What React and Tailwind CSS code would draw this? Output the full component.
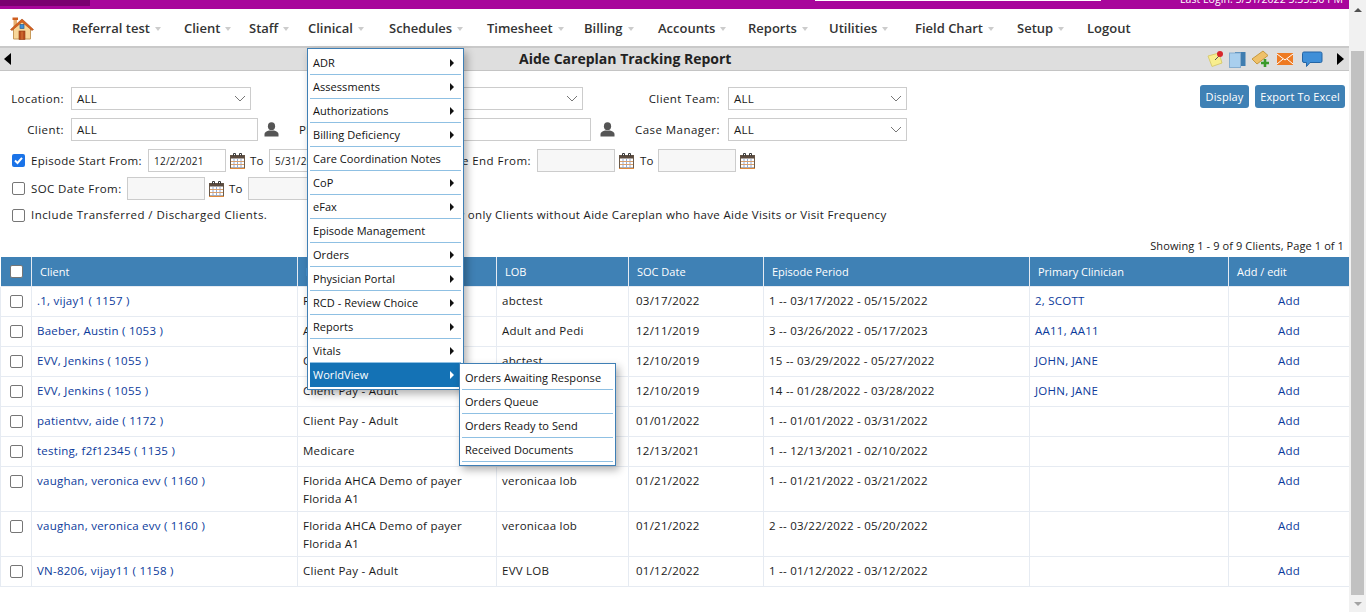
import React from 'react';

const navItems = [
    ['Referral test', true, 'w-[112px]'],
    ['Client', true, 'w-[65px]'],
    ['Staff', true, 'w-[59px]'],
    ['Clinical', true, 'w-[81px]'],
    ['Schedules', true, 'w-[98px]'],
    ['Timesheet', true, 'w-[97px]'],
    ['Billing', true, 'w-[74px]'],
    ['Accounts', true, 'w-[90px]'],
    ['Reports', true, 'w-[81px]'],
    ['Utilities', true, 'w-[86px]'],
    ['Field Chart', true, 'w-[102px]'],
    ['Setup', true, 'w-[70px]'],
    ['Logout', false, 'w-[60px]'],
];

const clinicalMenu = [
    ['ADR', true],
    ['Assessments', true],
    ['Authorizations', true],
    ['Billing Deficiency', true],
    ['Care Coordination Notes', false],
    ['CoP', true],
    ['eFax', true],
    ['Episode Management', false],
    ['Orders', true],
    ['Physician Portal', true],
    ['RCD - Review Choice', true],
    ['Reports', true],
    ['Vitals', true],
];

const subMenu = ['Orders Awaiting Response', 'Orders Queue', 'Orders Ready to Send', 'Received Documents'];

const rows = [
    { client: '.1, vijay1 ( 1157 )', payer: 'Private Pay', lob: 'abctest', soc: '03/17/2022', episode: '1 -- 03/17/2022 - 05/15/2022', clinician: '2, SCOTT' },
    { client: 'Baeber, Austin ( 1053 )', payer: 'Adult and Pedi', lob: 'Adult and Pedi', soc: '12/11/2019', episode: '3 -- 03/26/2022 - 05/17/2023', clinician: 'AA11, AA11' },
    { client: 'EVV, Jenkins ( 1055 )', payer: 'Client Pay - Adult', lob: 'abctest', soc: '12/10/2019', episode: '15 -- 03/29/2022 - 05/27/2022', clinician: 'JOHN, JANE' },
    { client: 'EVV, Jenkins ( 1055 )', payer: 'Client Pay - Adult', lob: 'abctest', soc: '12/10/2019', episode: '14 -- 01/28/2022 - 03/28/2022', clinician: 'JOHN, JANE' },
    { client: 'patientvv, aide ( 1172 )', payer: 'Client Pay - Adult', lob: '', soc: '01/01/2022', episode: '1 -- 01/01/2022 - 03/31/2022', clinician: '' },
    { client: 'testing, f2f12345 ( 1135 )', payer: 'Medicare', lob: '', soc: '12/13/2021', episode: '1 -- 12/13/2021 - 02/10/2022', clinician: '' },
    { client: 'vaughan, veronica evv ( 1160 )', payer: 'Florida AHCA Demo of payer Florida A1', lob: 'veronicaa lob', soc: '01/21/2022', episode: '1 -- 01/21/2022 - 03/21/2022', clinician: '', tall: true },
    { client: 'vaughan, veronica evv ( 1160 )', payer: 'Florida AHCA Demo of payer Florida A1', lob: 'veronicaa lob', soc: '01/21/2022', episode: '2 -- 03/22/2022 - 05/20/2022', clinician: '', tall: true },
    { client: 'VN-8206, vijay11 ( 1158 )', payer: 'Client Pay - Adult', lob: 'EVV LOB', soc: '01/12/2022', episode: '1 -- 01/12/2022 - 03/12/2022', clinician: '' },
];

const Calendar = () => (
    <svg width="17" height="17" viewBox="0 0 17 17" className="block shrink-0">
        <rect x="1.5" y="3.5" width="14" height="12.500" fill="#fff" stroke="#6b5a4a" />
        <rect x="1.500" y="3.500" width="14" height="3" fill="#5a4a3e" />
        <path d="M4.500 4V1.500h2V4M10.500 4V1.500h2V4" fill="none" stroke="#3a3a3a" />
        <path d="M5 7v9M8.500 7v9M12 7v9" stroke="#8fa9d6" />
        <path d="M2 9.500h13M2 12.500h13" stroke="#d8a06e" />
        <path d="M1 16.500h15" stroke="#e08a3c" />
    </svg>
);

const Person = () => (
    <svg width="15" height="15" viewBox="0 0 15 15" className="block shrink-0">
        <ellipse cx="7.500" cy="4.200" rx="3.600" ry="3.900" fill="#555" />
        <path d="M0.500 14.500v-2.500c0-2 2.500-3 4.500-3.600h5c2 .6 4.500 1.600 4.500 3.600v2.500z" fill="#555" />
    </svg>
);

const House = () => (
    <svg width="24" height="23" viewBox="0 0 24 23" className="block">
        <rect x="3.500" y="2" width="3.500" height="8" fill="#e8b070" />
        <rect x="2.500" y="0.500" width="5.500" height="2.500" fill="#cf5f20" />
        <path d="M3.500 11 12 3l8.500 8v11h-17z" fill="#f8d79a" stroke="#c79a5a" />
        <path d="M0.500 12.500 12 2l11.500 10.500-1.500 1L12 5 2 13.500z" fill="#d9641f" stroke="#a8481a" strokeWidth="0.600" />
        <rect x="9" y="14" width="6" height="8.500" fill="#b84f1e" stroke="#8f3d16" strokeWidth="0.600" />
        <path d="M12 14.500v8" stroke="#d97a3a" />
        <rect x="10" y="7.500" width="4" height="4" fill="#3f8fd8" stroke="#2b5f8f" strokeWidth="0.700" />
    </svg>
);

const Caret = ({ color = '#111' }) => (
    <span className="w-0 h-0 border-y-[4px] border-y-transparent border-l-[4px]" style={{ borderLeftColor: color }} />
);

const Field = ({ className, value = '', disabled }) => (
    <div className={`h-[23px] border border-[#ccc] px-[5px] flex items-center ${disabled ? 'bg-[#f7f7f7]' : 'bg-white'} ${className}`}>
        {value}
    </div>
);

const Select = ({ className, value = 'ALL' }) => (
    <div className={`h-[23px] border border-[#ccc] bg-white pl-[5px] pr-[4px] flex items-center justify-between ${className}`}>
        <span>{value}</span>
        <svg width="12" height="7" viewBox="0 0 12 7"><path d="M1 1l5 5 5-5" fill="none" stroke="#777" /></svg>
    </div>
);

const Check = ({ checked }) => (
    checked ? (
        <span className="w-[13px] h-[13px] rounded-[2px] bg-[#1a73e8] flex items-center justify-center shrink-0">
            <svg width="11" height="11" viewBox="0 0 11 11"><path d="M2 5.500 4.500 8 9 2.800" fill="none" stroke="#fff" strokeWidth="2" /></svg>
        </span>
    ) : (
        <span className="block w-[13px] h-[13px] rounded-[2px] border border-[#767676] bg-white shrink-0" />
    )
);

const Button = ({ children, className }) => (
    <div className={`h-[23px] self-start -mt-[2px] rounded-[3px] bg-[#3f81b5] text-white text-[11px] tracking-[0.1px] flex items-center justify-center ${className}`}>
        {children}
    </div>
);

const Th = ({ className, children }) => (
    <div className={`border-r border-[#e6ebf2] flex items-center px-2 ${className}`}>{children}</div>
);

const cols = {
    check: 'w-[31px]',
    client: 'w-[266px]',
    payer: 'w-[199px]',
    lob: 'w-[132px]',
    soc: 'w-[135px]',
    episode: 'w-[266px]',
    clinician: 'w-[199px]',
    add: 'w-[120px]',
};

const Row = ({ row }) => (
    <div className={`flex border-b border-[#e6ebf2] border-l ${row.tall ? 'h-[45px]' : 'h-[30px]'}`}>
        <div className={`${cols.check} shrink-0 border-r border-[#e6ebf2] flex justify-center pt-[8px] pl-[1px]`}><Check /></div>
        <div className={`${cols.client} shrink-0 border-r border-[#e6ebf2] pl-[5px] pt-[5px] text-[#0b3a9b]`}>{row.client}</div>
        <div className={`${cols.payer} shrink-0 border-r border-[#e6ebf2] pl-[5px] pr-[20px] pt-[5px] leading-[18px]`}>{row.payer}</div>
        <div className={`${cols.lob} shrink-0 border-r border-[#e6ebf2] pl-[5px] pt-[5px]`}>{row.lob}</div>
        <div className={`${cols.soc} shrink-0 border-r border-[#e6ebf2] pl-[7px] pt-[5px]`}>{row.soc}</div>
        <div className={`${cols.episode} shrink-0 border-r border-[#e6ebf2] pl-[5px] pt-[5px]`}>{row.episode}</div>
        <div className={`${cols.clinician} shrink-0 border-r border-[#e6ebf2] pl-[5px] pt-[5px] text-[#0b3a9b]`}>{row.clinician}</div>
        <div className={`${cols.add} shrink-0 pt-[5px] text-center text-[#0b3a9b]`}>Add</div>
    </div>
);

const MenuItem = ({ label, arrow, active }) => (
    <div className={`h-[24px] flex items-center justify-between pl-[3px] pr-[7px] ${active ? 'bg-[#1472b5] text-white' : 'border-b border-[#8fc0e3]'}`}>
        <span>{label}</span>
        {arrow && <Caret color={active ? '#fff' : '#111'} />}
    </div>
);

export default function App() {
    return (
        <div className="relative h-[612px] w-[1366px] overflow-hidden bg-white text-[11.5px] leading-[18px] tracking-[0.25px] text-[#1a1a1a] font-['Open_Sans',sans-serif]">
            <div className="flex h-[612px]">
                <div className="w-[1349px] shrink-0">
                    {/* top strip */}
                    <div className="relative h-[9px] bg-[#a8069b] overflow-hidden">
                        <div className="absolute left-0 top-0 h-[6px] w-[90px] bg-[#7a0070]" />
                        <div className="absolute left-[815px] top-0 h-[1px] w-[286px] bg-white" />
                        <div className="absolute right-[6px] top-[-10px] text-[10.5px] tracking-[0.05px] text-white whitespace-nowrap">Last Login: 5/31/2022 3:35:36 PM</div>
                    </div>

                    {/* main nav */}
                    <div className="h-[39px] border-b-2 border-[#c9c9c9] flex items-center pl-[10px] text-[13px] tracking-normal text-[#333] font-semibold">
                        <div className="w-[62px] pt-[1px]"><House /></div>
                        {navItems.map(([label, caret, w]) => (
                            <div key={label} className={`${w} shrink-0 flex items-center gap-[5px] whitespace-nowrap`}>
                                <span>{label}</span>
                                {caret && <span className="w-0 h-0 border-x-[3px] border-x-transparent border-t-[4px] border-t-[#ccc] mt-[2px]" />}
                            </div>
                        ))}
                    </div>

                    {/* title bar */}
                    <div className="h-[23px] bg-[#dedede] border-b border-[#c4c4c4] flex items-center pl-[4px] pr-[5px]">
                        <span className="w-0 h-0 border-y-[6px] border-y-transparent border-r-[7px] border-r-black" />
                        <span className="ml-[508px] font-bold text-[14px] tracking-normal text-[#222]">Aide Careplan Tracking Report</span>
                        <div className="ml-auto flex items-center">
                            <svg width="18" height="18" viewBox="0 0 18 18" className="block">
                                <path d="M1 6l11-3 3 10-10 3.500z" fill="#f8ee8e" stroke="#d9cc72" />
                                <path d="M8 10l4-4" stroke="#555" />
                                <circle cx="13" cy="4" r="3" fill="#d8262c" />
                            </svg>
                            <svg width="17" height="17" viewBox="0 0 17 17" className="block ml-[4px]">
                                <rect x="6" y="1" width="10.500" height="14" fill="#3f7db0" />
                                <rect x="0.500" y="2" width="11" height="14.500" fill="#a9cfee" stroke="#86aed0" />
                            </svg>
                            <svg width="19" height="18" viewBox="0 0 19 18" className="block ml-[5px]">
                                <path d="M1 9 12 1l5 4.500L6 14z" fill="#efc169" stroke="#c6983e" />
                                <path d="M10 13h8M14 9v8" stroke="#3a9a2a" strokeWidth="2.600" />
                            </svg>
                            <svg width="16" height="12" viewBox="0 0 16 12" className="block ml-[7px]">
                                <rect width="16" height="12" fill="#ee7a22" />
                                <path d="M0 1l8 6 8-6M0 11l6-5M16 11l-6-5" fill="none" stroke="#fff" />
                            </svg>
                            <svg width="22" height="17" viewBox="0 0 22 17" className="block ml-[8px]">
                                <path d="M3 1h16.500q1.500 0 1.500 1.500v7.500q0 1.500-1.500 1.500H9l-3.500 4v-4H3q-1.500 0-1.500-1.500v-7.500Q1.500 1 3 1z" fill="#3f8fd8" stroke="#2465a5" />
                            </svg>
                            <span className="w-0 h-0 ml-[14px] border-y-[6px] border-y-transparent border-l-[7px] border-l-black" />
                        </div>
                    </div>

                    {/* filters */}
                    <div className="relative h-[186px]">
                        <div className="flex items-center pt-[16px]">
                            <span className="w-[64px] text-right tracking-[0.45px]">Location:</span>
                            <Select className="ml-[7px] w-[180px]" />
                            <Select className="ml-[150px] w-[182px]" value="" />
                            <span className="w-[137px] text-right tracking-[0.4px]">Client Team:</span>
                            <Select className="ml-[8px] w-[179px]" />
                            <Button className="ml-[293px] w-[49px]">Display</Button>
                            <Button className="ml-[6px] w-[90px]">Export To Excel</Button>
                        </div>
                        <div className="flex items-center pt-[8px]">
                            <span className="w-[64px] text-right tracking-[0.45px]">Client:</span>
                            <Field className="ml-[7px] w-[187px]" value="ALL" />
                            <span className="ml-[6px]"><Person /></span>
                            <span className="ml-[20px] w-[40px]">Physician:</span>
                            <Field className="ml-[11px] w-[241px]" />
                            <span className="ml-[9px]"><Person /></span>
                            <span className="w-[105px] text-right tracking-[0.45px]">Case Manager:</span>
                            <Select className="ml-[8px] w-[179px]" />
                        </div>
                        <div className="flex items-center pt-[8px]">
                            <span className="ml-[12px]"><Check checked /></span>
                            <span className="ml-[6px] w-[111px] whitespace-nowrap tracking-[0.3px]">Episode Start From:</span>
                            <Field className="ml-[6px] w-[78px] text-[10px]" value="12/2/2021" />
                            <span className="ml-[3px]"><Calendar /></span>
                            <span className="ml-[4px] w-[16px]">To</span>
                            <Field className="ml-[3px] w-[78px] shrink-0 text-[10px]" value="5/31/2022" />
                            <span className="ml-[3px] w-[181px] shrink-0 text-right whitespace-nowrap tracking-[0.45px]">Episode End From:</span>
                            <Field className="ml-[6px] w-[78px]" disabled />
                            <span className="ml-[3px]"><Calendar /></span>
                            <span className="ml-[5px] w-[16px]">To</span>
                            <Field className="ml-[2px] w-[78px]" disabled />
                            <span className="ml-[3px]"><Calendar /></span>
                        </div>
                        <div className="flex items-center pt-[5px]">
                            <span className="ml-[12px]"><Check /></span>
                            <span className="ml-[6px] w-[90px] whitespace-nowrap tracking-[0.4px]">SOC Date From:</span>
                            <Field className="ml-[6px] w-[78px]" disabled />
                            <span className="ml-[3px]"><Calendar /></span>
                            <span className="ml-[4px] w-[16px]">To</span>
                            <Field className="ml-[3px] w-[78px]" disabled />
                        </div>
                        <div className="flex items-center pt-[6px]">
                            <span className="ml-[12px]"><Check /></span>
                            <span className="ml-[6px] w-[400px] whitespace-nowrap tracking-[0.45px]">Include Transferred / Discharged Clients.</span>
                            <span className="ml-[3px] whitespace-nowrap tracking-[0.33px]">Show only Clients without Aide Careplan who have Aide Visits or Visit Frequency</span>
                        </div>
                        <div className="absolute right-[5px] bottom-[2px] text-[11px] tracking-[0.1px]">Showing 1 - 9 of 9 Clients, Page 1 of 1</div>
                    </div>

                    {/* table */}
                    <div className="h-[30px] flex bg-[#3f81b5] text-white text-[11px] tracking-normal ml-[1px] border-b border-[#e6ebf2]">
                        <div className={`${cols.check} shrink-0 border-r border-[#e6ebf2] flex items-center justify-center`}><Check /></div>
                        <Th className={`${cols.client} shrink-0`}>Client</Th>
                        <Th className={`${cols.payer} shrink-0`}>Payer</Th>
                        <Th className={`${cols.lob} shrink-0`}>LOB</Th>
                        <Th className={`${cols.soc} shrink-0`}>SOC Date</Th>
                        <Th className={`${cols.episode} shrink-0`}>Episode Period</Th>
                        <Th className={`${cols.clinician} shrink-0`}>Primary Clinician</Th>
                        <div className={`${cols.add} shrink-0 flex items-center px-2`}>Add / edit</div>
                    </div>
                    {rows.map((row, i) => <Row key={i} row={row} />)}
                </div>

                {/* scrollbar */}
                <div className="w-[17px] bg-[#f1f1f1] flex flex-col">
                    <div className="h-[17px] flex items-center justify-center pt-[3px]">
                        <span className="w-0 h-0 border-x-[4px] border-x-transparent border-b-[4px] border-b-[#505050]" />
                    </div>
                    <div className="h-[34px]" />
                    <div className="mx-[2px] h-[544px] bg-[#c1c1c1]" />
                    <div className="flex-1 flex items-center justify-center">
                        <span className="w-0 h-0 border-x-[4px] border-x-transparent border-t-[4px] border-t-[#a3a3a3]" />
                    </div>
                </div>
            </div>

            {/* clinical dropdown */}
            <div className="absolute left-[307px] top-[48px] w-[157px] bg-white border border-[#3f7fb5] pt-[2px] px-[2px] pb-[2px] shadow-[3px_4px_8px_rgba(0,0,0,0.3)] text-[11px] tracking-[0.05px] text-[#111]">
                {clinicalMenu.map(([label, arrow]) => <MenuItem key={label} label={label} arrow={arrow} />)}
                <MenuItem label="WorldView" arrow active />
            </div>
            <div className="absolute left-[459px] top-[363px] w-[157px] bg-white border border-[#3f7fb5] pt-[2px] px-[2px] pb-[3px] shadow-[3px_4px_8px_rgba(0,0,0,0.3)] text-[11px] tracking-[0.05px] text-[#111]">
                {subMenu.map((label) => <MenuItem key={label} label={label} />)}
            </div>
        </div>
    );
}
